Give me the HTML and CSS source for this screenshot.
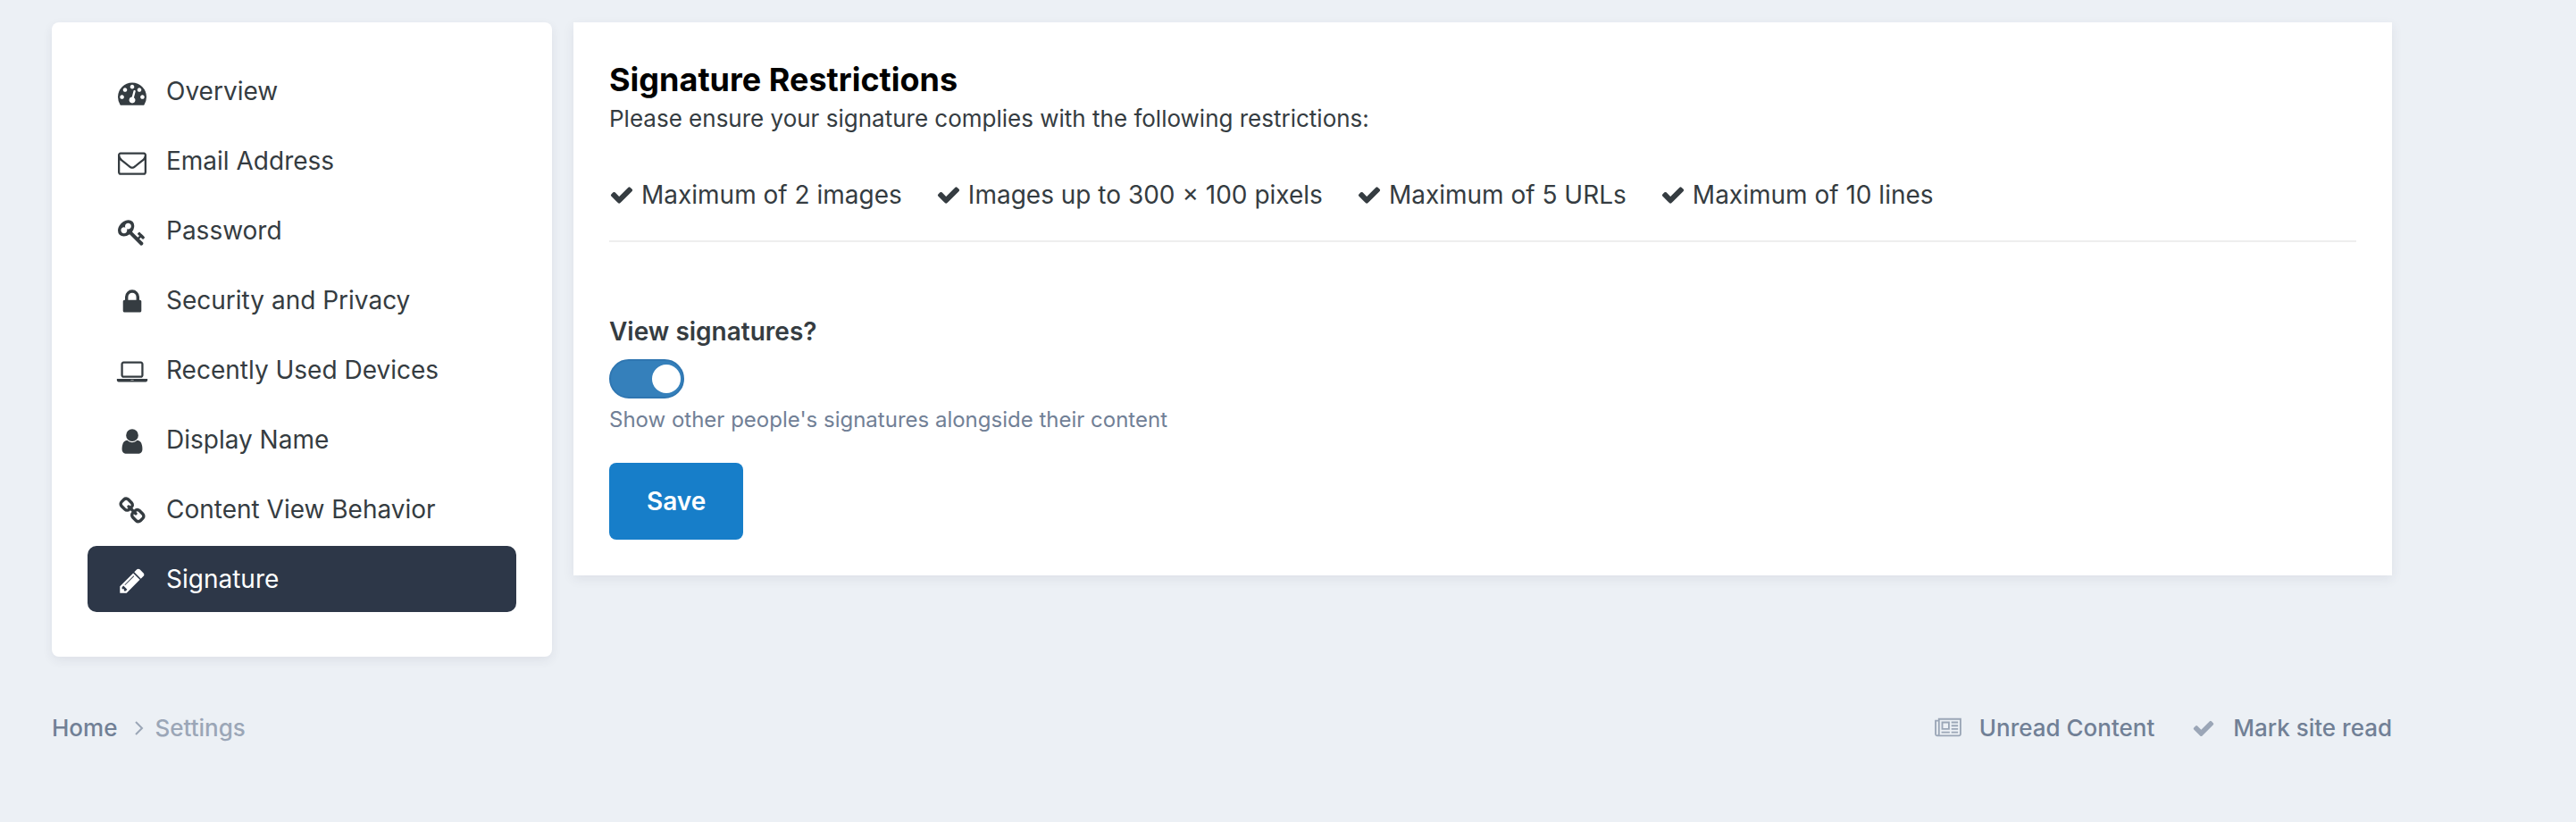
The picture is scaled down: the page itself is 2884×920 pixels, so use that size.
FILE: index.html
```html
<!DOCTYPE html>
<html lang="en">
  <head>
    <meta charset="utf-8" />
    <title>Settings</title>
    <link rel="stylesheet" href="styles.css">
  </head>

  <body>
    <div class="layout">
      <nav class="box sidebar">
        <ul class="menu">
          <li>
            <a href="#" class="menu-item">
              <svg class="icon" viewBox="0 0 1792 1792"><path d="M384 1152q0-53-37.5-90.5t-90.5-37.5-90.5 37.5-37.5 90.5 37.5 90.5 90.5 37.5 90.5-37.5 37.5-90.5zm192-448q0-53-37.5-90.5t-90.5-37.5-90.5 37.5-37.5 90.5 37.5 90.5 90.5 37.5 90.5-37.5 37.5-90.5zm428 481l101-382q6-26-7.5-48.5t-38.5-29.5-48 6.5-30 39.5l-101 382q-60 5-107 43.5t-63 98.5q-20 77 20 146t117 89 146-20 89-117q16-60-6-117t-72-91zm660-33q0-53-37.5-90.5t-90.5-37.5-90.5 37.5-37.5 90.5 37.5 90.5 90.5 37.5 90.5-37.5 37.5-90.5zm-640-640q0-53-37.5-90.5t-90.5-37.5-90.5 37.5-37.5 90.5 37.5 90.5 90.5 37.5 90.5-37.5 37.5-90.5zm448 192q0-53-37.5-90.5t-90.5-37.5-90.5 37.5-37.5 90.5 37.5 90.5 90.5 37.5 90.5-37.5 37.5-90.5zm320 448q0 261-141 483-19 29-54 29h-1402q-35 0-54-29-141-221-141-483 0-182 71-348t191-286 286-191 348-71 348 71 286 191 191 286 71 348z"/></svg>
              Overview
            </a>
          </li>
          <li>
            <a href="#" class="menu-item">
              <svg class="icon" viewBox="0 0 1792 1792"><path d="M1664 1504v-768q-32 36-69 66-268 206-426 338-51 43-83 67t-86.5 48.5-102.5 24.5h-2q-48 0-102.5-24.5t-86.5-48.5-83-67q-158-132-426-338-37-30-69-66v768q0 13 9.5 22.5t22.5 9.5h1472q13 0 22.5-9.5t9.5-22.5zm0-1051v-24.5l-.5-13-3-12.5-5.5-9-9-7.5-14-2.5h-1472q-13 0-22.5 9.5t-9.5 22.5q0 168 147 284 193 152 401 317 6 5 35 29.5t46 37.5 44.5 31.5 50.5 27.5 43 9h2q20 0 43-9t50.5-27.5 44.5-31.5 46-37.5 35-29.5q208-165 401-317 54-43 100.5-115.5t46.5-131.5zm128-37v1088q0 66-47 113t-113 47h-1472q-66 0-113-47t-47-113v-1088q0-66 47-113t113-47h1472q66 0 113 47t47 113z"/></svg>
              Email Address
            </a>
          </li>
          <li>
            <a href="#" class="menu-item">
              <svg class="icon" viewBox="0 0 1792 1792"><path d="M832 512q0-80-56-136t-136-56-136 56-56 136q0 42 19 83-41-19-83-19-80 0-136 56t-56 136 56 136 136 56 136-56 56-136q0-42-19-83 41 19 83 19 80 0 136-56t56-136zm851 704q0 17-49 66t-66 49q-9 0-28.5-16t-36.5-33-38.5-40-24.5-26l-96 96 220 220q28 28 28 68 0 42-39 81t-81 39q-40 0-68-28l-671-671q-176 131-365 131-163 0-265.5-102.5t-102.5-265.5q0-160 95-313t248-248 313-95q163 0 265.5 102.5t102.5 265.5q0 189-131 365l355 355 96-96q-3-3-26-24.5t-40-38.5-33-36.5-16-28.5q0-17 49-66t66-49q13 0 23 10 6 6 46 44.5t82 79.5 86.5 86 73 78 28.5 41z"/></svg>
              Password
            </a>
          </li>
          <li>
            <a href="#" class="menu-item">
              <svg class="icon" viewBox="0 0 1792 1792"><path d="M640 768h512v-192q0-106-75-181t-181-75-181 75-75 181v192zm832 96v576q0 40-28 68t-68 28h-960q-40 0-68-28t-28-68v-576q0-40 28-68t68-28h32v-192q0-184 132-316t316-132 316 132 132 316v192h32q40 0 68 28t28 68z"/></svg>
              Security and Privacy
            </a>
          </li>
          <li>
            <a href="#" class="menu-item">
              <svg class="icon" viewBox="0 0 1920 1792"><path d="M416 1280q-66 0-113-47t-47-113v-704q0-66 47-113t113-47h1088q66 0 113 47t47 113v704q0 66-47 113t-113 47h-1088zm-32-864v704q0 13 9.5 22.5t22.5 9.5h1088q13 0 22.5-9.5t9.5-22.5v-704q0-13-9.5-22.5t-22.5-9.5h-1088q-13 0-22.5 9.5t-9.5 22.5zm1376 928h160v96q0 40-47 68t-113 28h-1600q-66 0-113-28t-47-68v-96h1760zm-720 96q16 0 16-16t-16-16h-160q-16 0-16 16t16 16h160z"/></svg>
              Recently Used Devices
            </a>
          </li>
          <li>
            <a href="#" class="menu-item">
              <svg class="icon" viewBox="0 0 1792 1792"><path d="M1536 1399q0 109-62.5 187t-150.5 78h-854q-88 0-150.5-78t-62.5-187q0-85 8.5-160.5t31.5-152 58.5-131 94-89 134.5-34.5q131 128 313 128t313-128q76 0 134.5 34.5t94 89 58.5 131 31.5 152 8.5 160.5zm-256-887q0 159-112.5 271.5t-271.5 112.5-271.5-112.5-112.5-271.5 112.5-271.5 271.5-112.5 271.5 112.5 112.5 271.5z"/></svg>
              Display Name
            </a>
          </li>
          <li>
            <a href="#" class="menu-item">
              <svg class="icon" viewBox="0 0 1792 1792"><path d="M1520 1216q0-40-28-68l-208-208q-28-28-68-28-42 0-72 32 3 3 19 18.5t21.5 21.5 15 19 13 25.5 3.5 27.5q0 40-28 68t-68 28q-15 0-27.5-3.5t-25.5-13-19-15-21.5-21.5-18.5-19q-33 31-33 73 0 40 28 68l206 207q27 27 68 27 40 0 68-26l147-146q28-28 28-67zm-703-705q0-40-28-68l-206-207q-28-28-68-28-39 0-68 27l-147 146q-28 28-28 67 0 40 28 68l208 208q27 27 68 27 42 0 72-31-3-3-19-18.5t-21.5-21.5-15-19-13-25.5-3.5-27.5q0-40 28-68t68-28q15 0 27.5 3.5t25.5 13 19 15 21.5 21.5 18.5 19q33-31 33-73zm895 705q0 120-85 203l-147 146q-83 83-203 83-121 0-204-85l-206-207q-83-83-83-203 0-123 88-209l-88-88q-86 88-208 88-120 0-204-84l-208-208q-84-84-84-204t85-203l147-146q83-83 203-83 121 0 204 85l206 207q83 83 83 203 0 123-88 209l88 88q86-88 208-88 120 0 204 84l208 208q84 84 84 204z"/></svg>
              Content View Behavior
            </a>
          </li>
          <li>
            <a href="#" class="menu-item is-active">
              <svg class="icon" viewBox="0 0 1792 1792"><path d="M491 1536l91-91-235-235-91 91v107h128v128h107zm523-928q0-22-22-22-10 0-17 7l-542 542q-7 7-7 17 0 22 22 22 10 0 17-7l542-542q7-7 7-17zm-54-192l416 416-832 832h-416v-416zm683 96q0 53-37 90l-166 166-416-416 166-165q36-38 90-38 53 0 91 38l235 234q37 39 37 91z"/></svg>
              Signature
            </a>
          </li>
        </ul>
      </nav>

      <main class="box content">
        <h1>Signature Restrictions</h1>
        <p class="intro">Please ensure your signature complies with the following restrictions:</p>
        <ul class="restrictions">
          <li><svg class="check" viewBox="0 0 1792 1792"><use href="#check" /></svg>Maximum of 2 images</li>
          <li><svg class="check" viewBox="0 0 1792 1792"><use href="#check" /></svg>Images up to 300 × 100 pixels</li>
          <li><svg class="check" viewBox="0 0 1792 1792"><use href="#check" /></svg>Maximum of 5 URLs</li>
          <li><svg class="check" viewBox="0 0 1792 1792"><use href="#check" /></svg>Maximum of 10 lines</li>
        </ul>

        <form>
          <label class="field-label" for="view-signatures">View signatures?</label>
          <input type="checkbox" class="toggle" id="view-signatures" aria-describedby="view-hint" checked />
          <p class="hint" id="view-hint">Show other people's signatures alongside their content</p>
          <button type="button" class="save">Save</button>
        </form>
      </main>
    </div>

    <footer class="footer">
      <nav class="crumbs">
        <a href="#">Home</a>
        <svg class="angle" viewBox="0 0 10 16"><path d="M1 1l7 7-7 7" /></svg>
        <span>Settings</span>
      </nav>
      <div class="actions">
        <a href="#">
          <svg class="newspaper" viewBox="0 0 2048 1792"><path d="M1024 512h-384v384h384v-384zm128 640v128h-640v-128h640zm0-768v640h-640v-640h640zm640 768v128h-512v-128h512zm0-256v128h-512v-128h512zm0-256v128h-512v-128h512zm0-256v128h-512v-128h512zm-1536 960v-960h-128v960q0 26 19 45t45 19 45-19 19-45zm1664 0v-1088h-1536v1088q0 33-11 64h1483q26 0 45-19t19-45zm128-1216v1216q0 80-56 136t-136 56h-1664q-80 0-136-56t-56-136v-1088h256v-128h1792z"/></svg>
          Unread Content
        </a>
        <a href="#">
          <svg class="mark" viewBox="0 0 1792 1792"><path id="check" d="M1671 566q0 40-28 68l-724 724-136 136q-28 28-68 28t-68-28l-136-136-362-362q-28-28-28-68t28-68l136-136q28-28 68-28t68 28l294 295 656-657q28-28 68-28t68 28l136 136q28 28 28 68z"/></svg>
          Mark site read
        </a>
      </div>
    </footer>
  </body>
</html>
```

FILE: styles.css
```css
:root {
  --color-bg: #ecf0f5;
  --color-text: #353c41;
  --color-muted: #718096;
  --color-active: #2d3748;
  --color-button: #177ec9;
  --color-toggle: #3580bb;
}

* {
  box-sizing: border-box;
}

body {
  margin: 0;
  padding: 25px 206px 40px 58px;
  background-color: var(--color-bg);
  color: var(--color-text);
  font-family: 'Inter', 'Helvetica', 'Arial', sans-serif;
  font-size: 28px;
  line-height: 42px;
}

h1,
p,
ul {
  margin: 0;
  padding: 0;
}

ul {
  list-style: none;
}

a {
  color: inherit;
  text-decoration: none;
}

svg {
  flex: none;
  fill: currentColor;
}

.layout {
  display: flex;
  align-items: flex-start;
  gap: 24px;
}

.box {
  background-color: #fff;
  box-shadow: 0 4px 12px rgba(45, 55, 72, 0.08);
}

.sidebar {
  flex: none;
  width: 560px;
  padding: 40px 40px 50px;
  border-radius: 8px;
}

.menu {
  display: flex;
  flex-direction: column;
  gap: 4px;
}

.menu-item {
  display: flex;
  align-items: center;
  gap: 20px;
  padding: 16px 32px;
  border-radius: 10px;
}

.menu-item.is-active {
  background-color: var(--color-active);
  color: #fff;
}

.icon {
  width: 36px;
  height: 32px;
  margin-top: 4px;
}

.content {
  flex: 1;
  padding: 40px;
}

h1 {
  color: #000;
  font-size: 36px;
  font-weight: 700;
  line-height: 48px;
}

.intro {
  font-size: 26px;
  line-height: 40px;
}

.restrictions {
  display: flex;
  flex-wrap: wrap;
  gap: 0 38px;
  margin-top: 44px;
  padding-bottom: 30px;
  border-bottom: 2px solid #eee;
}

.restrictions li {
  display: flex;
  align-items: center;
  gap: 8px;
}

.check {
  width: 28px;
  height: 28px;
}

form {
  display: flex;
  flex-direction: column;
  align-items: flex-start;
  margin-top: 79px;
}

.field-label {
  font-weight: 600;
}

.toggle {
  appearance: none;
  display: flex;
  align-items: center;
  width: 84px;
  height: 44px;
  margin: 10px 0 6px;
  padding: 0 2px;
  border: 2px solid #2f76b1;
  border-radius: 22px;
  background-color: var(--color-toggle);
}

.toggle::before {
  content: '';
  width: 32px;
  height: 32px;
  border-radius: 50%;
  background-color: #fff;
}

.toggle:checked {
  justify-content: flex-end;
}

.hint {
  color: var(--color-muted);
  font-size: 24px;
  line-height: 36px;
}

.save {
  margin-top: 30px;
  padding: 22px 42px;
  border: 0;
  border-radius: 8px;
  background-color: var(--color-button);
  color: #fff;
  font: inherit;
  font-weight: 600;
}

.footer {
  display: flex;
  justify-content: space-between;
  margin-top: 60px;
  color: var(--color-muted);
  font-size: 26px;
  font-weight: 500;
  line-height: 40px;
}

.crumbs,
.actions,
.actions a {
  display: flex;
  align-items: center;
}

.crumbs span,
.crumbs svg,
.actions svg {
  opacity: 0.65;
}

.angle {
  width: 10px;
  height: 16px;
  margin: 0 12px 0 20px;
  fill: none;
  stroke: currentColor;
  stroke-width: 2;
}

.actions {
  gap: 42px;
}

.actions a {
  gap: 20px;
}

.newspaper {
  width: 30px;
  height: 26px;
}

.mark {
  width: 26px;
  height: 26px;
}
```
